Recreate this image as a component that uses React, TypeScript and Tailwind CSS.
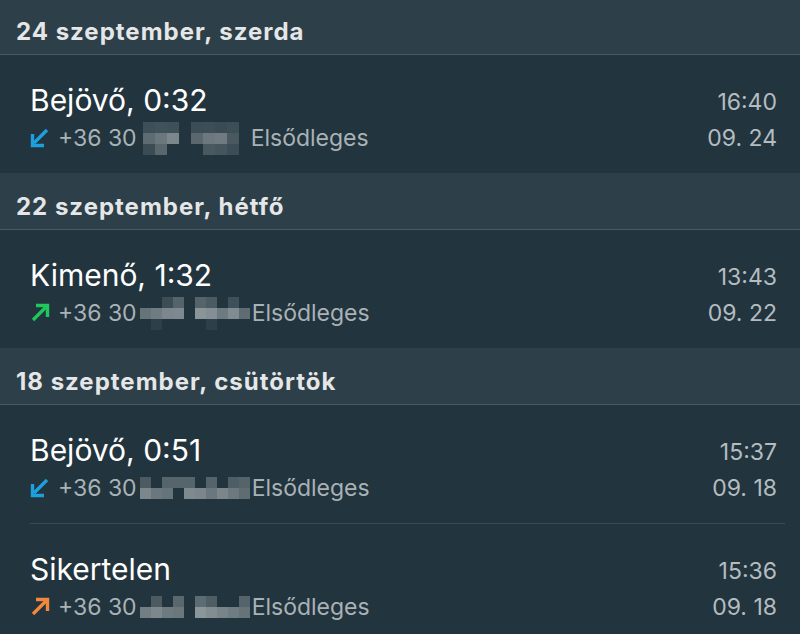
import React from 'react';

type Kind = 'in' | 'out' | 'missed';

type Call = {
  title: string;
  kind: Kind;
  time: string;
  date: string;
  cell: number;
  gapL: number;
  gapR: number;
  blur: string[][];
};

type Day = { label: string; calls: Call[] };

// pixelated (blurred) phone digits, '' = background
const B = '';

const days: Day[] = [
  {
    label: '24 szeptember, szerda',
    calls: [
      {
        title: 'Bejövő, 0:32',
        kind: 'in',
        time: '16:40',
        date: '09. 24',
        cell: 12,
        gapL: 6,
        gapR: 12,
        blur: [
          ['#3e4f57', '#40525a', '#3e5058', B, '#3c4d55', '#3c4e56', '#3a4b53', '#3c4e56'],
          ['#5d6b72', '#6a777d', '#7c878c', B, '#5a686e', '#6c787e', '#6f7b81', '#4a5960'],
          ['#3b4c54', '#59676d', B, B, B, '#4a5960', '#45555c', '#3c4d55'],
        ],
      },
    ],
  },
  {
    label: '22 szeptember, hétfő',
    calls: [
      {
        title: 'Kimenő, 1:32',
        kind: 'out',
        time: '13:43',
        date: '09. 22',
        cell: 11,
        gapL: 3,
        gapR: 2,
        blur: [
          [B, B, '#3c4d55', '#55646b', B, '#55646b', '#4c5b62', B, '#3f5058', B],
          ['#66747a', '#6f7c82', '#7b878c', '#7d898e', B, '#8a9599', '#838f94', '#6d7a80', '#808c91', '#5f6d73'],
          [B, '#2d3f47', B, B, B, B, '#2d3f47', B, B, B],
        ],
      },
    ],
  },
  {
    label: '18 szeptember, csütörtök',
    calls: [
      {
        title: 'Bejövő, 0:51',
        kind: 'in',
        time: '15:37',
        date: '09. 18',
        cell: 11,
        gapL: 3,
        gapR: 2,
        blur: [
          ['#4c5b62', B, '#56656c', '#56656c', '#56656c', B, '#55646b', B, '#4f5e65', '#55646b'],
          ['#7b878c', '#6a777d', '#66737a', B, '#7f8a8f', '#7a868b', '#6a777d', '#7b868b', '#6c797f', '#5f6d73'],
        ],
      },
      {
        title: 'Sikertelen',
        kind: 'missed',
        time: '15:36',
        date: '09. 18',
        cell: 11,
        gapL: 3,
        gapR: 2,
        blur: [
          [B, '#4c5b62', B, '#5a686e', B, '#5d6b72', '#4f5e65', B, B, '#55646b'],
          ['#717e84', '#7d888d', '#6d7a80', '#6a777d', B, '#8b969a', '#828d92', '#788489', '#6f7c82', '#66747a'],
        ],
      },
    ],
  },
];

const arrowColor: Record<Kind, string> = {
  in: '#1e9fe0',
  out: '#1fc75c',
  missed: '#f2883d',
};

function CallArrow({ kind }: { kind: Kind }) {
  const color = arrowColor[kind];
  if (kind === 'in') {
    return (
      <svg width="20" height="20" viewBox="0 0 20 20" className="shrink-0">
        <path d="M17 2 L4 15" stroke={color} strokeWidth="3.4" fill="none" />
        <path d="M2.5 6 V17.5 H14" stroke={color} strokeWidth="3.4" fill="none" />
      </svg>
    );
  }
  return (
    <svg width="20" height="20" viewBox="0 0 20 20" className="shrink-0">
      <path d="M3 17 L16 4" stroke={color} strokeWidth="3.4" fill="none" />
      <path d="M6 2.5 H17.5 V14" stroke={color} strokeWidth="3.4" fill="none" />
    </svg>
  );
}

function Blur({ grid, cell }: { grid: string[][]; cell: number }) {
  return (
    <div className="flex flex-col">
      {grid.map((row, r) => (
        <div key={r} className="flex">
          {row.map((c, i) => (
            <div key={i} className="h-[11px]" style={{ width: cell, backgroundColor: c || 'transparent' }} />
          ))}
        </div>
      ))}
    </div>
  );
}

function CallRow({ call, last }: { call: Call; last: boolean }) {
  return (
    <div className="bg-[#22343d]">
      <div className="flex justify-between h-[118px] pt-[27px] pl-[30px] pr-[23px]">
        <div className="flex flex-col">
          <div className="text-[30px] leading-[36px] text-white">{call.title}</div>
          <div className="flex items-center h-[36px] mt-[2px] text-[23px] text-[#a9b2b6]">
            <CallArrow kind={call.kind} />
            <span className="ml-[8px]">+36 30</span>
            <div style={{ marginLeft: call.gapL, marginRight: call.gapR }}>
              <Blur grid={call.blur} cell={call.cell} />
            </div>
            <span>Elsődleges</span>
          </div>
        </div>
        <div className="flex flex-col items-end pt-[2px] text-[23px] text-[#b5bcc0]">
          <div className="leading-[36px]">{call.time}</div>
          <div className="leading-[36px]">{call.date}</div>
        </div>
      </div>
      {!last && <div className="ml-[30px] mr-[15px] h-px bg-[#3b4c54]" />}
    </div>
  );
}

export default function App() {
  return (
    <div
      className="w-[800px] h-[634px] overflow-hidden bg-[#22343d]"
      style={{ fontFamily: 'Inter, "Noto Sans", sans-serif' }}
    >
      <div className="-mt-[2px]">
        {days.map((day) => (
          <div key={day.label}>
            <div className="h-[57px] bg-[#2d3f48] border-b border-[#4b5a61] flex items-center pl-[16px] pt-[12px]">
              <span className="text-[24px] font-bold tracking-[1px] text-[#e4e6e7]">{day.label}</span>
            </div>
            {day.calls.map((call, i) => (
              <CallRow key={i} call={call} last={i === day.calls.length - 1} />
            ))}
          </div>
        ))}
        <div className="h-[57px] bg-[#2d3f48]" />
      </div>
    </div>
  );
}
